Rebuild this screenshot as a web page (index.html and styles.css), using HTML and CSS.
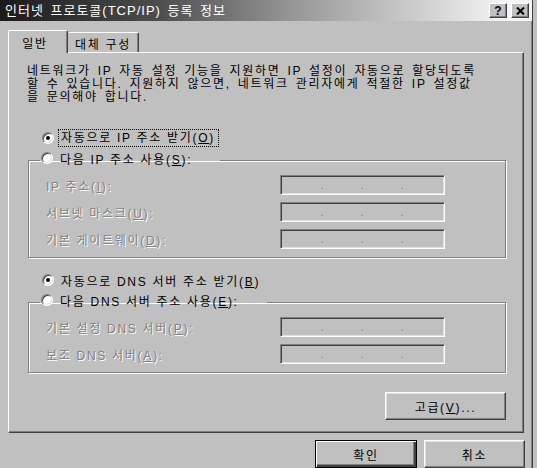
FILE: index.html
```html
<!DOCTYPE html>
<html lang="ko">
<head>
  <meta charset="UTF-8" />
  <title>인터넷 프로토콜(TCP/IP) 등록 정보</title>
  <link rel="stylesheet" href="styles.css">
</head>
<body>
  <div class="dialog">
    <div class="titlebar">
      <span class="title">인터넷 프로토콜(TCP/IP) 등록 정보</span>
      <div class="caption-btns">
        <button class="cap-btn">?</button>
        <button class="cap-btn">
          <svg width="9" height="8" viewBox="0 0 9 8"><path d="M1 0.5 L8 7.5 M8 0.5 L1 7.5" stroke="#000" stroke-width="2"/></svg>
        </button>
      </div>
    </div>

    <div class="content">
      <div class="tabs">
        <div class="tab active">일반</div>
        <div class="tab">대체 구성</div>
      </div>

      <div class="panel">
        <p class="intro">네트워크가 IP 자동 설정 기능을 지원하면 IP 설정이 자동으로 할당되도록<br>할 수 있습니다. 지원하지 않으면, 네트워크 관리자에게 적절한 IP 설정값<br>을 문의해야 합니다.</p>

        <div class="radio-row first">
          <span class="radio checked"></span>
          <span class="focus">자동으로 IP 주소 받기(<u>O</u>)</span>
        </div>

        <fieldset class="group">
          <legend><span class="radio"></span><span class="txt">다음 IP 주소 사용(<u>S</u>):</span></legend>
          <div class="field-row">
            <span class="dim">IP 주소(<u>I</u>):</span>
            <span class="ipbox"><i>.</i><i>.</i><i>.</i></span>
          </div>
          <div class="field-row">
            <span class="dim">서브넷 마스크(<u>U</u>):</span>
            <span class="ipbox"><i>.</i><i>.</i><i>.</i></span>
          </div>
          <div class="field-row">
            <span class="dim">기본 게이트웨이(<u>D</u>):</span>
            <span class="ipbox"><i>.</i><i>.</i><i>.</i></span>
          </div>
        </fieldset>

        <div class="radio-row dns">
          <span class="radio checked"></span>
          <span class="txt">자동으로 DNS 서버 주소 받기(<u>B</u>)</span>
        </div>

        <fieldset class="group">
          <legend><span class="radio"></span><span class="txt">다음 DNS 서버 주소 사용(<u>E</u>):</span></legend>
          <div class="field-row">
            <span class="dim">기본 설정 DNS 서버(<u>P</u>):</span>
            <span class="ipbox"><i>.</i><i>.</i><i>.</i></span>
          </div>
          <div class="field-row">
            <span class="dim">보조 DNS 서버(<u>A</u>):</span>
            <span class="ipbox"><i>.</i><i>.</i><i>.</i></span>
          </div>
        </fieldset>

        <div class="advanced">
          <button class="btn wide">고급(<u>V</u>)...</button>
        </div>
      </div>

      <div class="actions">
        <button class="btn default">확인</button>
        <button class="btn">취소</button>
      </div>
    </div>
  </div>
</body>
</html>
```

FILE: styles.css
```css
* {
  margin: 0;
  padding: 0;
  box-sizing: border-box;
}
body {
  background-color: #c0c0c0;
  font-family: "Liberation Sans", "Noto Sans CJK KR", sans-serif;
  font-size: 12px;
  letter-spacing: 1.7px;
  color: #000;
}
u {
  text-decoration: underline;
}
.dialog {
  width: 533px;
  height: 468px;
  border-right: 1px solid #404040;
  box-shadow: inset -1px 0 #808080;
  overflow: hidden;
}

/* title bar */
.titlebar {
  height: 21px;
  display: flex;
  align-items: center;
  justify-content: space-between;
  padding: 0 3px 0 5px;
  background: linear-gradient(to right, #1a1a1a 0%, #4e4e4e 30%, #979797 55%, #f4f4f4 95%);
}
.title {
  color: #fff;
  font-size: 13px;
  letter-spacing: 1px;
  line-height: 14px;
  word-spacing: 2px;
}
.caption-btns {
  display: flex;
  gap: 4px;
}
.cap-btn {
  width: 18px;
  height: 15px;
  display: flex;
  align-items: center;
  justify-content: center;
  background-color: #c0c0c0;
  border: 1px solid;
  border-color: #fff #404040 #404040 #fff;
  box-shadow: inset -1px -1px #808080;
  font: bold 12px "Liberation Sans", sans-serif;
  letter-spacing: 0;
  line-height: 12px;
}

/* tabs */
.content {
  padding: 9px 0 0 8px;
}
.tabs {
  display: flex;
  align-items: flex-end;
  height: 22px;
}
.tab {
  position: relative;
  height: 20px;
  display: flex;
  align-items: center;
  justify-content: center;
  border-top: 1px solid #fff;
  border-right: 1px solid #404040;
  box-shadow: inset -1px 0 #808080;
  border-radius: 2px 2px 0 0;
  width: 71px;
  padding-top: 2px;
}
.tab.active {
  z-index: 1;
  width: 60px;
  height: 23px;
  margin-bottom: -1px;
  border-left: 1px solid #fff;
  background-color: #c0c0c0;
  padding: 0 6px 0 0;
}

/* panel */
.panel {
  width: 516px;
  height: 381px;
  padding: 12px 0 0 18px;
  border-top: 1px solid #fff;
  border-left: 1px solid #fff;
  border-right: 1px solid #404040;
  border-bottom: 1px solid #404040;
  box-shadow: inset -1px -1px #808080;
}
.intro {
  line-height: 13px;
  word-spacing: 2px;
}

/* radio buttons */
.radio-row {
  display: flex;
  align-items: center;
  height: 18px;
  padding-left: 15px;
}
.radio-row.first {
  margin-top: 25px;
}
.radio-row.dns {
  margin-top: 13px;
}
.radio-row .txt {
  margin-left: 7px;
}
.radio {
  position: relative;
  flex: none;
  width: 12px;
  height: 12px;
  border-radius: 50%;
  background-color: #fff;
  border: 1px solid;
  border-color: #808080 #fff #fff #808080;
  box-shadow: inset 1px 1px #404040, inset -1px -1px #dfdfdf;
}
.radio.checked::after {
  content: "";
  position: absolute;
  left: 3px;
  top: 3px;
  width: 4px;
  height: 4px;
  border-radius: 50%;
  background-color: #000;
}
.focus {
  margin-left: 4px;
  padding: 0 3px 0 2px;
  border: 1px dotted #000;
  line-height: 16px;
}

/* group boxes */
.group {
  width: 478px;
  margin: 4px 0 0 1px;
  padding: 6px 0 8px 17px;
  border: 1px solid #808080;
  box-shadow: 1px 1px 0 #fff, inset 1px 1px 0 #fff;
  min-inline-size: 0;
}
.group legend {
  display: flex;
  align-items: center;
  height: 18px;
  margin-left: -6px;
  padding: 0 28px 4px 1px;
}
.group legend .txt {
  margin-left: 7px;
}
.field-row {
  display: grid;
  grid-template-columns: 234px 165px;
  align-items: center;
  height: 20px;
}
.field-row + .field-row {
  margin-top: 7px;
}
.dim {
  color: #808080;
  text-shadow: 1px 1px 0 #fff;
}
.ipbox {
  height: 20px;
  display: flex;
  gap: 34px;
  padding-left: 38px;
  border: 1px solid;
  border-color: #808080 #fff #fff #808080;
  box-shadow: inset 1px 1px #404040, inset -1px -1px #dfdfdf;
}
.ipbox i {
  width: 6px;
  font-style: normal;
  text-align: center;
  letter-spacing: 0;
  color: #808080;
  font-size: 11px;
  line-height: 18px;
}

/* buttons */
.btn {
  height: 28px;
  width: 101px;
  background-color: #c0c0c0;
  border: 1px solid;
  border-color: #fff #404040 #404040 #fff;
  box-shadow: inset -1px -1px #808080, inset 1px 1px #dfdfdf;
  font-family: inherit;
  font-size: 12px;
  letter-spacing: 1.7px;
  color: #000;
}
.btn.wide {
  width: 121px;
}
.btn.default {
  border: 1px solid #000;
  box-shadow: inset 1px 1px #fff, inset -2px -2px #404040, inset -3px -3px #808080;
}
.advanced {
  width: 479px;
  display: flex;
  justify-content: flex-end;
  margin-top: 19px;
}
.actions {
  display: flex;
  justify-content: flex-end;
  gap: 7px;
  margin-top: 7px;
  padding-right: 7px;
}
.actions .btn.default {
  width: 102px;
}
```
